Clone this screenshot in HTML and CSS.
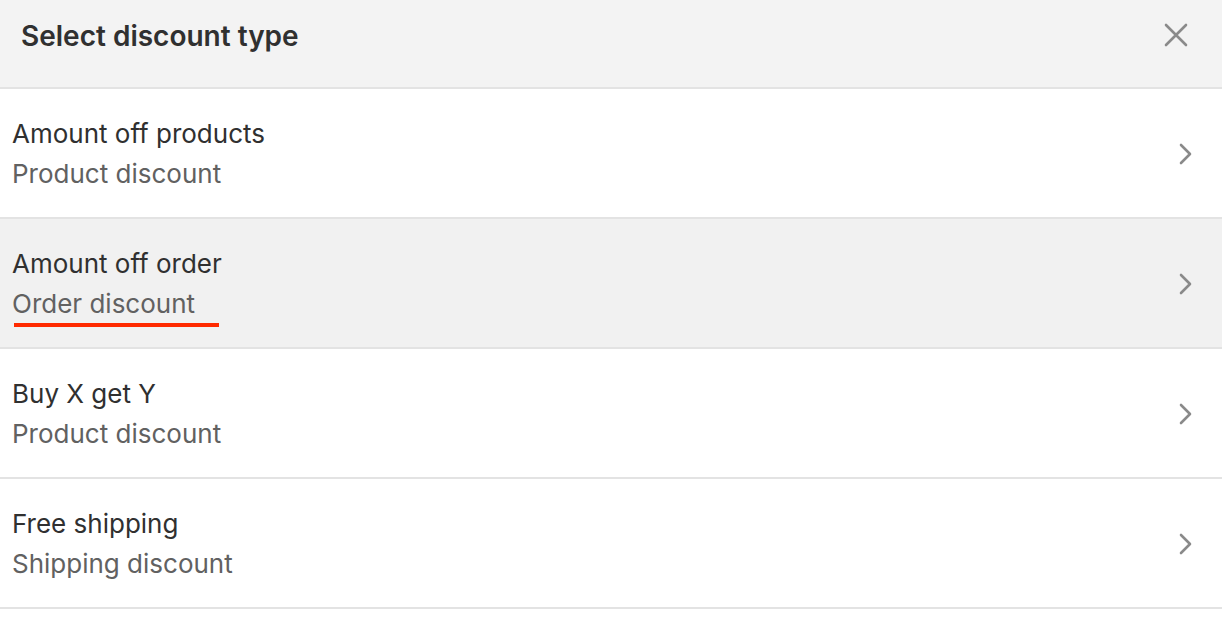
FILE: index.html
```html
<!DOCTYPE html>
<html>
<head>
<meta charset="utf-8">
<link rel="stylesheet" href="styles.css">
</head>
<body>
<div class="modal">
  <div class="header">
    <h2 class="title">Select discount type</h2>
    <button class="close" aria-label="Close">
      <svg width="24" height="24" viewBox="0 0 24 24"><path d="M2 2 L22 22 M22 2 L2 22" stroke="#8a8a8a" stroke-width="2.6" stroke-linecap="round" fill="none"/></svg>
    </button>
  </div>
  <ul class="list">
    <li class="item">
      <div class="text"><div class="name">Amount off products</div><div class="sub">Product discount</div></div>
      <svg class="chev" width="16" height="22" viewBox="0 0 16 22"><path d="M3 2 L12 11 L3 20" stroke="#8a8a8a" stroke-width="2.6" stroke-linecap="round" stroke-linejoin="round" fill="none"/></svg>
    </li>
    <li class="item active">
      <div class="text"><div class="name">Amount off order</div><div class="sub">Order discount</div></div>
      <svg class="chev" width="16" height="22" viewBox="0 0 16 22"><path d="M3 2 L12 11 L3 20" stroke="#8a8a8a" stroke-width="2.6" stroke-linecap="round" stroke-linejoin="round" fill="none"/></svg>
      <span class="mark"></span>
    </li>
    <li class="item">
      <div class="text"><div class="name">Buy X get Y</div><div class="sub">Product discount</div></div>
      <svg class="chev" width="16" height="22" viewBox="0 0 16 22"><path d="M3 2 L12 11 L3 20" stroke="#8a8a8a" stroke-width="2.6" stroke-linecap="round" stroke-linejoin="round" fill="none"/></svg>
    </li>
    <li class="item">
      <div class="text"><div class="name">Free shipping</div><div class="sub">Shipping discount</div></div>
      <svg class="chev" width="16" height="22" viewBox="0 0 16 22"><path d="M3 2 L12 11 L3 20" stroke="#8a8a8a" stroke-width="2.6" stroke-linecap="round" stroke-linejoin="round" fill="none"/></svg>
    </li>
  </ul>
</div>
</body>
</html>
```
FILE: styles.css
```css
* { box-sizing: border-box; }
html, body { margin: 0; padding: 0; background: #ffffff; }
body { font-family: Inter, "Noto Sans", sans-serif; color: #303030; }
.modal { width: 1222px; }
.header {
  height: 89px;
  background: #f3f3f3;
  border-bottom: 2px solid #e3e3e3;
  display: flex;
  align-items: flex-start;
  justify-content: space-between;
  padding: 16px 34px 0 21px;
}
.title {
  margin: 0;
  font-size: 28px;
  line-height: 40px;
  font-weight: 600;
  color: #303030;
  letter-spacing: 0;
}
.close {
  border: 0;
  background: transparent;
  padding: 0;
  margin-top: 7px;
  width: 24px;
  height: 24px;
  display: flex;
}
.list { list-style: none; margin: 0; padding: 0; }
.item {
  position: relative;
  height: 130px;
  border-bottom: 2px solid #e3e3e3;
  display: flex;
  align-items: center;
  justify-content: space-between;
  padding: 2px 28px 0 12px;
  background: #ffffff;
}
.item.active { background: #f1f1f1; }
.name { font-size: 26px; line-height: 40px; color: #303030; }
.sub { font-size: 26px; line-height: 40px; color: #616161; }
.chev { display: block; }
.mark {
  position: absolute;
  left: 14px;
  top: 104px;
  width: 205px;
  height: 4px;
  background: #ff2a00;
}
```
